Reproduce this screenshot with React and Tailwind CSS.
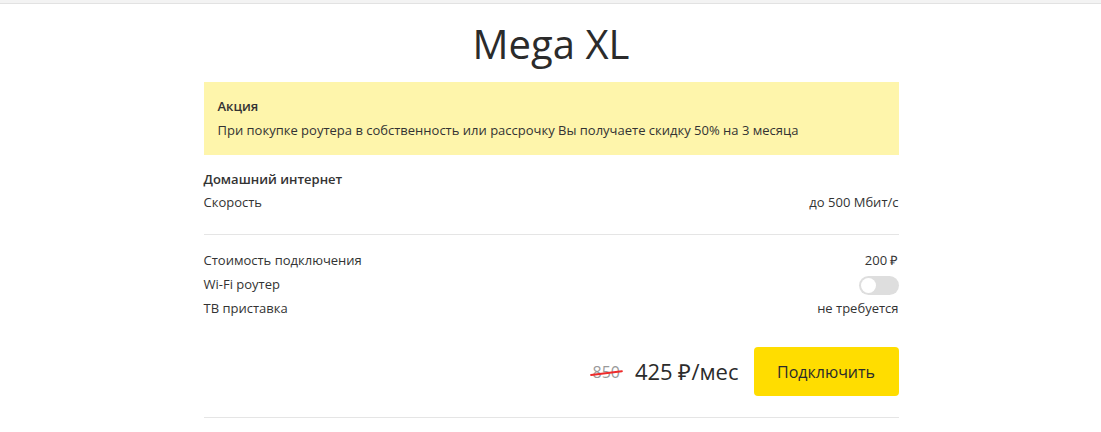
import React, { useState } from 'react';

const Row = ({ label, children }) => {
  return (
    <div className="flex items-center justify-between h-6">
      <span>{label}</span>
      <span>{children}</span>
    </div>
  );
};

const App = () => {
  const [router, setRouter] = useState(false);

  return (
    <div className="min-h-[432px] bg-white text-[#333] text-[13px] font-['Open_Sans',sans-serif]">
      <div className="h-[4px] bg-[#f3f3f3] border-b border-[#e2e2e2]" />
      <div className="pl-px">
        <div className="w-[695px] mx-auto">
          <h1 className="text-center text-[40px] leading-[54px] font-normal text-[#2b2b2b] mt-[13px]">Mega XL</h1>
          <div className="mt-[11px] bg-[#fef5ab] px-[14px] pt-[12px] pb-[13px]">
            <div className="font-semibold leading-6">Акция</div>
            <div className="leading-6">
              При покупке роутера в собственность или рассрочку Вы получаете скидку 50% на 3 месяца
            </div>
          </div>
          <div className="pt-[12px] pb-[19px] border-b border-[#e5e5e5]">
            <div className="font-semibold leading-6">Домашний интернет</div>
            <Row label="Скорость">до 500 Мбит/с</Row>
          </div>
          <div className="pt-[14px]">
            <Row label="Стоимость подключения">200 ₽</Row>
            <Row label="Wi-Fi роутер">
              <button
                onClick={() => setRouter(!router)}
                className={
                  router
                    ? 'flex items-center justify-end w-[40px] h-[19px] rounded-full bg-[#ffdd00] p-[2px]'
                    : 'flex items-center w-[40px] h-[19px] rounded-full bg-[#dedede] p-[2px]'
                }>
                <span className="block w-[15px] h-[15px] rounded-full bg-white" />
              </button>
            </Row>
            <Row label="ТВ приставка">не требуется</Row>
          </div>
          <div className="flex items-center justify-end mt-[26px] pb-[21px] border-b border-[#e5e5e5]">
            <span className="relative text-[16px] text-[#999] mr-[15px]">
              850
              <span className="absolute left-[-3px] right-[-3px] top-[52%] h-[2px] rounded-full bg-[#ee2b2b] -rotate-[7deg]" />
            </span>
            <span className="text-[22px] text-[#2b2b2b] mr-[15px]">425 ₽/мес</span>
            <button className="w-[145px] h-[49px] rounded-[4px] bg-[#ffdd00] text-[16px] text-[#2b2b2b]">
              Подключить
            </button>
          </div>
        </div>
      </div>
    </div>
  );
};

export default App;
